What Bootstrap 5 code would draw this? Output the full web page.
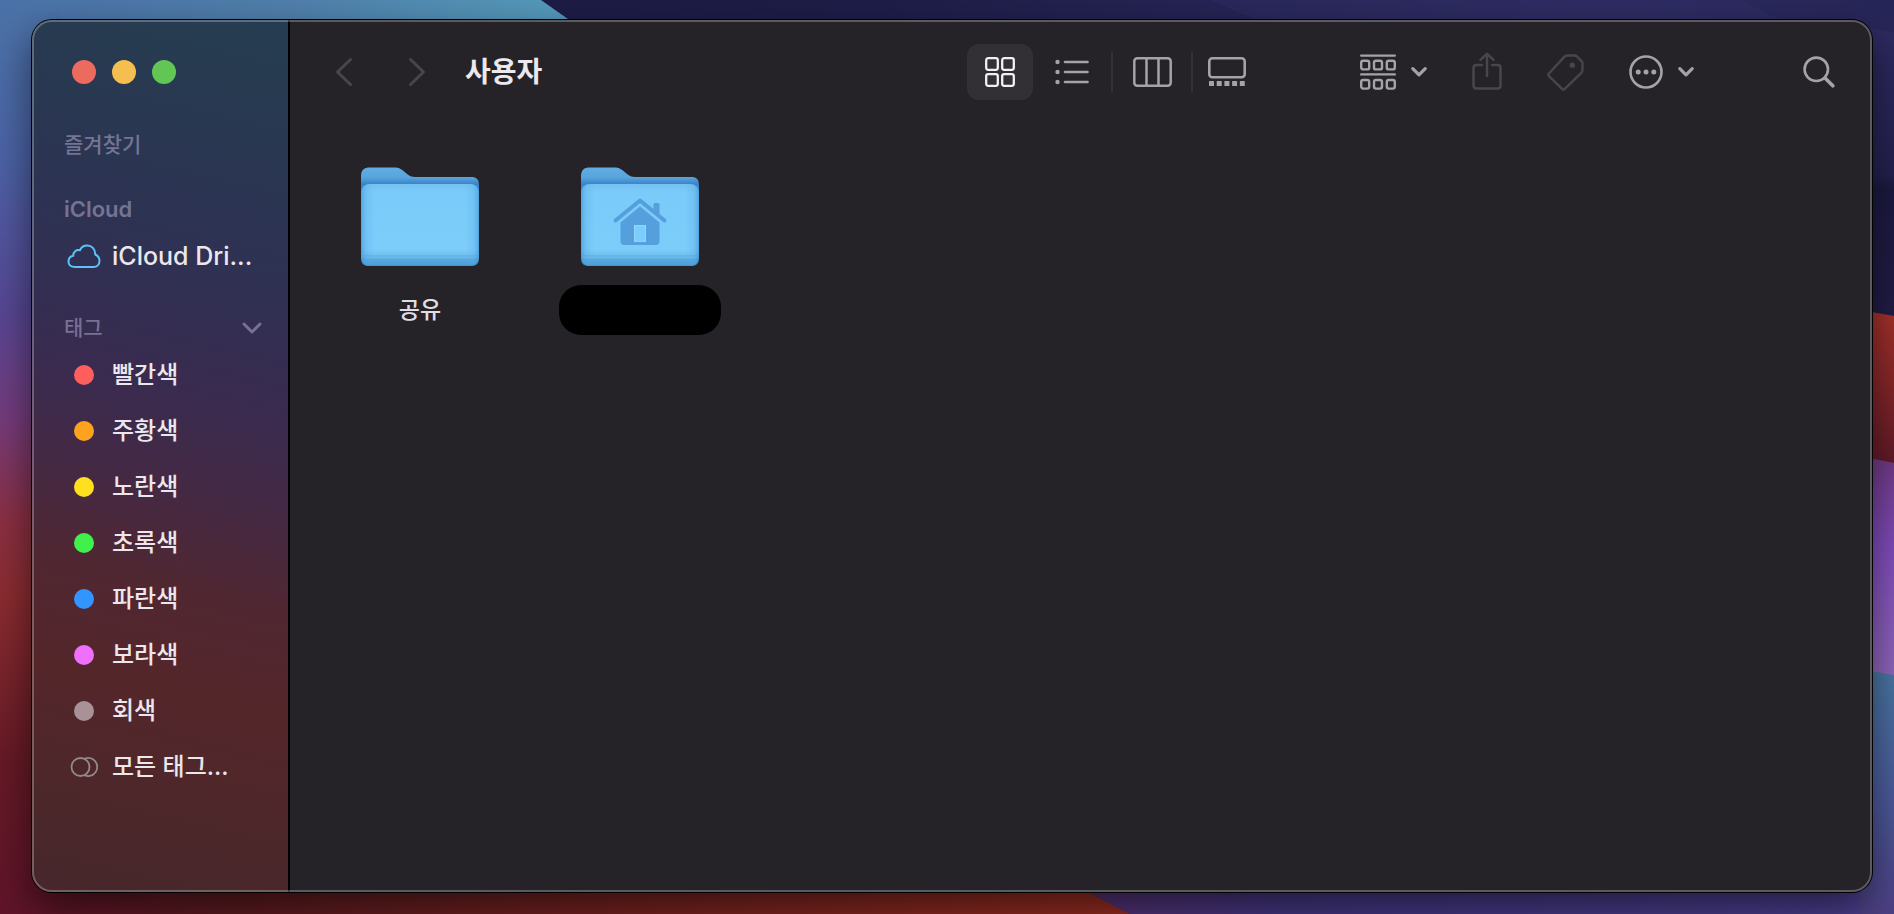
<!DOCTYPE html>
<html lang="ko">
<head>
<meta charset="utf-8">
<meta name="viewport" content="width=device-width, initial-scale=1">
<title>사용자</title>
<link href="https://cdn.jsdelivr.net/npm/bootstrap@5.3.0/dist/css/bootstrap.min.css" rel="stylesheet">
<style>
  body { font-family: Inter, "Noto Sans CJK KR", sans-serif; color: #e8e6ea; background: #1b1840; }
  .desktop { padding: 20px 22px 22px 32px; isolation: isolate; }
  .wallpaper { z-index: -1; }
  .finder { background: #252328; border-radius: 20px; box-shadow: 0 0 0 1px #000, 0 16px 40px rgba(0,0,0,.55); }
  .finder::after { content: ""; position: absolute; inset: 0; border: 2px solid rgba(255,255,255,.25); border-radius: 20px; pointer-events: none; }
  .glyph { display: block; flex: none; fill: none; stroke: currentColor; stroke-linecap: round; stroke-linejoin: round; }

  .sidebar { width: 258px; border-right: 2px solid #000; border-radius: 20px 0 0 20px;
    background: linear-gradient(193deg, #263c50 4%, #2b3552 20%, #322f52 33%, #3a2b4f 43%, #442944 53%, #502731 64%, #54262a 75%, #4e272a 86%, #47272b 98%); }
  .lights { padding: 40px 40px 0; gap: 16px; }
  .light { width: 24px; height: 24px; border: 0; padding: 0; border-radius: 50%; }
  .places { padding-top: 49px; }
  .section-title { font-size: 21px; font-weight: 500; line-height: 24px; margin: 0 0 7px; padding: 0 26px 0 32px; color: rgba(190,180,215,.5); }
  .section-latin { font-size: 22px; font-weight: 600; }
  .place { height: 56px; padding: 0 32px 0 35px; gap: 11px; font-size: 24px; line-height: 36px; font-weight: 500; color: #ebe7ec; text-decoration: none; }
  .place-latin { font-size: 25px; }
  .place-mark { width: 34px; }
  .dot { width: 20px; height: 20px; border-radius: 50%; }

  .toolbar { height: 104px; padding: 0 37px 0 34px; color: #a5a2a8; }
  .tool { border: 0; background: none; color: inherit; padding: 0; display: flex; align-items: center; justify-content: center; gap: 15px; }
  .tool:disabled { color: #48454b; }
  .nav-tool { width: 40px; height: 56px; }
  .history { gap: 33px; }
  .window-title { font-size: 28px; line-height: 40px; font-weight: 700; color: #ebe9ec; margin: 0 0 0 28px; }
  .views { gap: 6px; margin-right: 105px; }
  .view { width: 66px; height: 56px; border-radius: 12px; }
  .view-last { width: 56px; }
  .view.active { background: #323035; color: #f1eff3; }
  .rule { width: 2px; height: 40px; background: #333136; }
  .actions { gap: 45px; margin-right: 109px; }

  .files { padding: 43px 40px; gap: 40px; }
  .file { width: 180px; color: #e0dee2; text-decoration: none; }
  .file-name { height: 50px; margin-top: 18px; font-size: 23px; line-height: 50px; font-weight: 500; }
  .hidden-name { width: 162px; border-radius: 22px; background: #000; }
</style>
</head>
<body>
<div class="desktop position-relative d-flex vh-100 overflow-hidden">

  <svg class="wallpaper position-absolute top-0 start-0 w-100 h-100" viewBox="0 0 1894 914" preserveAspectRatio="none" aria-hidden="true">
    <defs>
      <linearGradient id="wLeft" x1="0" y1="0" x2="0" y2="1">
        <stop offset="0" stop-color="#4b72a8"/><stop offset=".16" stop-color="#4c63a6"/><stop offset=".33" stop-color="#574794"/>
        <stop offset=".45" stop-color="#743c7c"/><stop offset=".56" stop-color="#8a3044"/><stop offset=".65" stop-color="#8a2c30"/><stop offset=".83" stop-color="#661a26"/><stop offset="1" stop-color="#60142a"/>
      </linearGradient>
      <linearGradient id="wTop"><stop offset="0" stop-color="#4b72a8"/><stop offset=".5" stop-color="#5080ac"/><stop offset="1" stop-color="#559cbb"/></linearGradient>
      <linearGradient id="wNavy"><stop offset="0" stop-color="#1c1a45"/><stop offset=".45" stop-color="#1e1d48"/><stop offset=".85" stop-color="#2d2b62"/><stop offset="1" stop-color="#272658"/></linearGradient>
      <linearGradient id="wBottom"><stop offset="0" stop-color="#60142a"/><stop offset=".2" stop-color="#5c1b20"/><stop offset="1" stop-color="#982d21"/></linearGradient>
      <linearGradient id="wBottomR"><stop offset="0" stop-color="#5a3070"/><stop offset=".3" stop-color="#443784"/><stop offset="1" stop-color="#4c4090"/></linearGradient>
      <linearGradient id="wSky" x1="0" y1="0" x2="0" y2="1"><stop offset="0" stop-color="#2e2b62"/><stop offset=".5" stop-color="#24224f"/><stop offset=".55" stop-color="#1c1a40"/><stop offset="1" stop-color="#221c46"/></linearGradient>
      <linearGradient id="wRed" x1="0" y1="0" x2="0" y2="1"><stop offset="0" stop-color="#a8322b"/><stop offset="1" stop-color="#601a28"/></linearGradient>
      <linearGradient id="wPurple" x1="0" y1="0" x2="0" y2="1"><stop offset="0" stop-color="#703a84"/><stop offset=".4" stop-color="#804cbc"/><stop offset="1" stop-color="#9068bc"/></linearGradient>
      <linearGradient id="wBlue" x1="0" y1="0" x2="0" y2="1"><stop offset="0" stop-color="#4a78a4"/><stop offset=".5" stop-color="#4c5c9c"/><stop offset="1" stop-color="#4e4186"/></linearGradient>
    </defs>
    <rect width="1894" height="914" fill="url(#wNavy)"/>
    <path d="M1210 0H1740L1790 24H1266z" fill="#302e66" opacity=".45"/>
    <path d="M0 0H541L575 24H0z" fill="url(#wTop)"/>
    <rect y="12" width="60" height="902" fill="url(#wLeft)"/>
    <path d="M40 860H1028L1130 914H0z" fill="url(#wBottom)"/>
    <path d="M1028 860H1894V914H1130z" fill="url(#wBottomR)"/>
    <path d="M1860 27L1894 32V320H1860z" fill="url(#wSky)"/>
    <path d="M1860 310L1894 316V466H1860z" fill="url(#wRed)"/>
    <path d="M1860 456L1894 463V680H1860z" fill="url(#wPurple)"/>
    <path d="M1860 669L1894 675V914H1860z" fill="url(#wBlue)"/>
  </svg>

  <div class="finder position-relative d-flex flex-fill">
    <aside class="sidebar flex-shrink-0">
      <div class="lights d-flex">
        <button class="light" type="button" aria-label="닫기" style="background:#ed6a5f"></button>
        <button class="light" type="button" aria-label="최소화" style="background:#f5bf4f"></button>
        <button class="light" type="button" aria-label="확대" style="background:#62c655"></button>
      </div>
      <nav class="places">
        <h2 class="section-title">즐겨찾기</h2>
        <h2 class="section-title section-latin pt-4 mt-3">iCloud</h2>
        <ul class="list-unstyled mb-0">
          <li><a class="place place-latin d-flex align-items-center" href="#">
            <svg class="glyph" width="34" height="26" viewBox="0 0 34 26" style="color:#5ac3fa" stroke-width="2"><path d="M8 24C4 24 1.500 21.800 1.500 18.500C1.500 15.500 3.500 13.200 6.300 12.700C6 9 9.500 6.200 12.900 7.300C14.300 4.200 17 2.500 20.200 2.500C25 2.500 28.500 6.300 28.200 11.500C31 12.700 32.500 14.800 32.500 17.800C32.500 21.600 30 24 26.500 24z"/></svg>
            <span>iCloud Dri...</span></a></li>
        </ul>
        <h2 class="section-title d-flex justify-content-between align-items-center mt-4 pt-2">태그
          <svg class="glyph" width="20" height="12" viewBox="0 0 20 12" stroke-width="3"><path d="M2 2L10 10L18 2"/></svg></h2>
        <ul class="list-unstyled mb-0">
          <li><a class="place d-flex align-items-center" href="#"><span class="place-mark d-flex justify-content-center"><span class="dot" style="background:#ff5f5c"></span></span>빨간색</a></li>
          <li><a class="place d-flex align-items-center" href="#"><span class="place-mark d-flex justify-content-center"><span class="dot" style="background:#ffa31f"></span></span>주황색</a></li>
          <li><a class="place d-flex align-items-center" href="#"><span class="place-mark d-flex justify-content-center"><span class="dot" style="background:#ffe01f"></span></span>노란색</a></li>
          <li><a class="place d-flex align-items-center" href="#"><span class="place-mark d-flex justify-content-center"><span class="dot" style="background:#40f04c"></span></span>초록색</a></li>
          <li><a class="place d-flex align-items-center" href="#"><span class="place-mark d-flex justify-content-center"><span class="dot" style="background:#3395ff"></span></span>파란색</a></li>
          <li><a class="place d-flex align-items-center" href="#"><span class="place-mark d-flex justify-content-center"><span class="dot" style="background:#ef70ff"></span></span>보라색</a></li>
          <li><a class="place d-flex align-items-center" href="#"><span class="place-mark d-flex justify-content-center"><span class="dot" style="background:#a89298"></span></span>회색</a></li>
          <li><a class="place d-flex align-items-center" href="#"><span class="place-mark d-flex justify-content-center">
            <svg class="glyph" width="28" height="20" viewBox="0 0 28 20" style="color:#958889" stroke-width="1.800"><circle cx="10.500" cy="10" r="9"/><path d="M15 1.600A9 9 0 1 1 15 18.400"/></svg></span>모든 태그...</a></li>
        </ul>
      </nav>
    </aside>

    <main class="flex-fill">
      <header class="toolbar d-flex align-items-center">
        <div class="history d-flex">
          <button class="tool nav-tool" type="button" aria-label="뒤로" disabled><svg class="glyph" width="18" height="30" viewBox="0 0 18 30" stroke-width="3"><path d="M15.500 2.500L2.500 15L15.500 27.500"/></svg></button>
          <button class="tool nav-tool" type="button" aria-label="앞으로" disabled><svg class="glyph" width="18" height="30" viewBox="0 0 18 30" stroke-width="3"><path d="M2.500 2.500L15.500 15L2.500 27.500"/></svg></button>
        </div>
        <h1 class="window-title flex-fill">사용자</h1>

        <div class="views d-flex align-items-center">
          <button class="tool view active" type="button" aria-label="아이콘"><svg class="glyph" width="30" height="30" viewBox="0 0 30 30" stroke-width="2.300"><rect x="1.200" y="1.200" width="11.600" height="11.600" rx="2"/><rect x="17.200" y="1.200" width="11.600" height="11.600" rx="2"/><rect x="1.200" y="17.200" width="11.600" height="11.600" rx="2"/><rect x="17.200" y="17.200" width="11.600" height="11.600" rx="2"/></svg></button>
          <button class="tool view" type="button" aria-label="목록"><svg class="glyph" width="34" height="26" viewBox="0 0 34 26" stroke-width="2.600"><path d="M10 3H32.500M10 13H32.500M10 23H32.500"/><g fill="currentColor" stroke="none"><circle cx="2.500" cy="3" r="2.200"/><circle cx="2.500" cy="13" r="2.200"/><circle cx="2.500" cy="23" r="2.200"/></g></svg></button>
          <span class="rule"></span>
          <button class="tool view" type="button" aria-label="열"><svg class="glyph" width="39" height="30" viewBox="0 0 39 30" stroke-width="2.500"><rect x="1.300" y="1.300" width="36.400" height="27.400" rx="3"/><path d="M13.500 1.200V28.800M25.500 1.200V28.800"/></svg></button>
          <span class="rule"></span>
          <button class="tool view view-last" type="button" aria-label="갤러리"><svg class="glyph" width="38" height="30" viewBox="0 0 38 30" stroke-width="2.600"><rect x="1.300" y="1.300" width="35.400" height="19" rx="3"/><g fill="currentColor" stroke="none"><rect x="1" y="24" width="5" height="5" rx=".5"/><rect x="8.700" y="24" width="5" height="5" rx=".5"/><rect x="16.400" y="24" width="5" height="5" rx=".5"/><rect x="24.100" y="24" width="5" height="5" rx=".5"/><rect x="31.800" y="24" width="5" height="5" rx=".5"/></g></svg></button>
        </div>

        <div class="actions d-flex align-items-center">
          <button class="tool" type="button" aria-label="그룹"><svg class="glyph" width="36" height="36" viewBox="0 0 36 36" stroke-width="2.400"><path d="M1.200 1.600H34.800M1.200 20.400H34.800"/><rect x="1.200" y="6.800" width="8" height="8.600" rx="2"/><rect x="14" y="6.800" width="8" height="8.600" rx="2"/><rect x="26.800" y="6.800" width="8" height="8.600" rx="2"/><rect x="1.200" y="26" width="8" height="8.600" rx="2"/><rect x="14" y="26" width="8" height="8.600" rx="2"/><rect x="26.800" y="26" width="8" height="8.600" rx="2"/></svg><svg class="glyph" width="16" height="12" viewBox="0 0 16 12" stroke-width="3.200"><path d="M1.800 2.600L8 8.800L14.200 2.600"/></svg></button>
          <button class="tool" type="button" aria-label="공유" disabled><svg class="glyph" width="30" height="40" viewBox="0 0 30 40" stroke-width="2.500"><path d="M10 13H4.500C2.600 13 1.500 14 1.500 16V33.500C1.500 35.500 2.600 36.500 4.500 36.500H25.500C27.400 36.500 28.500 35.500 28.500 33.500V16C28.500 14 27.400 13 25.500 13H20"/><path d="M15 24V2M8.500 7.900L15 1.700L21.500 7.900"/></svg></button>
          <button class="tool" type="button" aria-label="태그" disabled><svg class="glyph" width="37" height="38" viewBox="0 0 38 38" stroke-width="2.500"><path d="M20.500 2H28.500C29.500 2 30 2.200 30.700 2.900L35.500 7.800C36.200 8.500 36.400 9 36.400 10V17C36.400 18.300 36.200 19 35.300 19.900L18.500 36.200C17.400 37.200 16.400 37.200 15.300 36.200L2.200 23.500C1.200 22.500 1.200 21.400 2.200 20.300L18 3.200C18.800 2.300 19.300 2 20.500 2z"/><circle cx="26" cy="12" r="2.700" fill="currentColor" stroke="none"/></svg></button>
          <button class="tool" type="button" aria-label="동작"><svg class="glyph" width="34" height="34" viewBox="0 0 34 34" stroke-width="2.600"><circle cx="17" cy="17" r="15.500"/><g fill="currentColor" stroke="none"><circle cx="9.200" cy="17" r="2.500"/><circle cx="17" cy="17" r="2.500"/><circle cx="24.800" cy="17" r="2.500"/></g></svg><svg class="glyph" width="16" height="12" viewBox="0 0 16 12" stroke-width="3.200"><path d="M1.800 2.600L8 8.800L14.200 2.600"/></svg></button>
        </div>
        <button class="tool" type="button" aria-label="검색"><svg class="glyph" width="32" height="32" viewBox="0 0 32 32"><circle cx="13.300" cy="13.300" r="11.700" stroke-width="2.600"/><path d="M22 22L29.800 29.800" stroke-width="3.600"/></svg></button>
      </header>

      <div class="files d-flex flex-wrap">
        <a class="file d-flex flex-column align-items-center" href="#">
          <svg width="118" height="100" viewBox="0 0 118 100">
            <defs>
              <linearGradient id="fBack" x1="0" y1="0" x2="0" y2="1"><stop offset="0" stop-color="#62ade2"/><stop offset=".1" stop-color="#57a5de"/><stop offset=".17" stop-color="#3a83c6"/><stop offset=".3" stop-color="#4a9ad8"/><stop offset="1" stop-color="#3b8ccb"/></linearGradient>
              <linearGradient id="fFront" x1="0" y1="0" x2="0" y2="1"><stop offset="0" stop-color="#74c1f1"/><stop offset=".1" stop-color="#7acbf9"/><stop offset=".8" stop-color="#7dcdfb"/><stop offset=".87" stop-color="#73c1f1"/><stop offset=".88" stop-color="#62b1e4"/><stop offset=".9" stop-color="#6ebdee"/><stop offset=".92" stop-color="#5aaae0"/><stop offset="1" stop-color="#4c9dd8"/></linearGradient>
              <linearGradient id="fSide"><stop offset="0" stop-color="#3f92d2" stop-opacity=".6"/><stop offset=".04" stop-color="#4fa4e0" stop-opacity=".25"/><stop offset=".12" stop-color="#5ab0e8" stop-opacity="0"/><stop offset=".88" stop-color="#5ab0e8" stop-opacity="0"/><stop offset=".96" stop-color="#4fa4e0" stop-opacity=".25"/><stop offset="1" stop-color="#3f92d2" stop-opacity=".6"/></linearGradient>
              <g id="folder">
                <path d="M0 9C0 3 3 .5 9 .5H33C38 .5 40 2 43 4.500L47 7.800C49.500 9.600 51 10 54 10H110C115.500 10 118 12.500 118 18V91C118 96.500 115.500 99 110 99H8C2.500 99 0 96.500 0 91z" fill="url(#fBack)"/>
                <rect x=".5" y="17" width="117" height="81.500" rx="8" fill="url(#fFront)"/>
                <rect x=".5" y="17" width="117" height="81.500" rx="8" fill="url(#fSide)"/>
              </g>
            </defs>
            <use href="#folder"/>
          </svg>
          <span class="file-name">공유</span>
        </a>
        <a class="file d-flex flex-column align-items-center" href="#" aria-label="홈">
          <svg width="118" height="100" viewBox="0 0 118 100">
            <use href="#folder"/>
            <path d="M34.500 53.500L59 33.500L83.500 53.500" stroke="#559fdd" stroke-width="4" stroke-linecap="round" stroke-linejoin="round" fill="none"/>
            <path d="M72.500 37.500Q72.500 36 74 36H77Q78.500 36 78.500 37.500V49L72.500 44z" fill="#559fdd"/>
            <path d="M59 39.500L78.500 55.500V74Q78.500 78 74.500 78H43.500Q39.500 78 39.500 74V55.500z" fill="#559fdd"/>
            <rect x="53.500" y="58.500" width="11" height="16" fill="#7dcdfb" stroke="#93d4fa" stroke-width="1"/>
          </svg>
          <span class="file-name hidden-name"></span>
        </a>
      </div>
    </main>
  </div>
</div>
<script src="https://cdn.jsdelivr.net/npm/bootstrap@5.3.0/dist/js/bootstrap.bundle.min.js"></script>
</body>
</html>
